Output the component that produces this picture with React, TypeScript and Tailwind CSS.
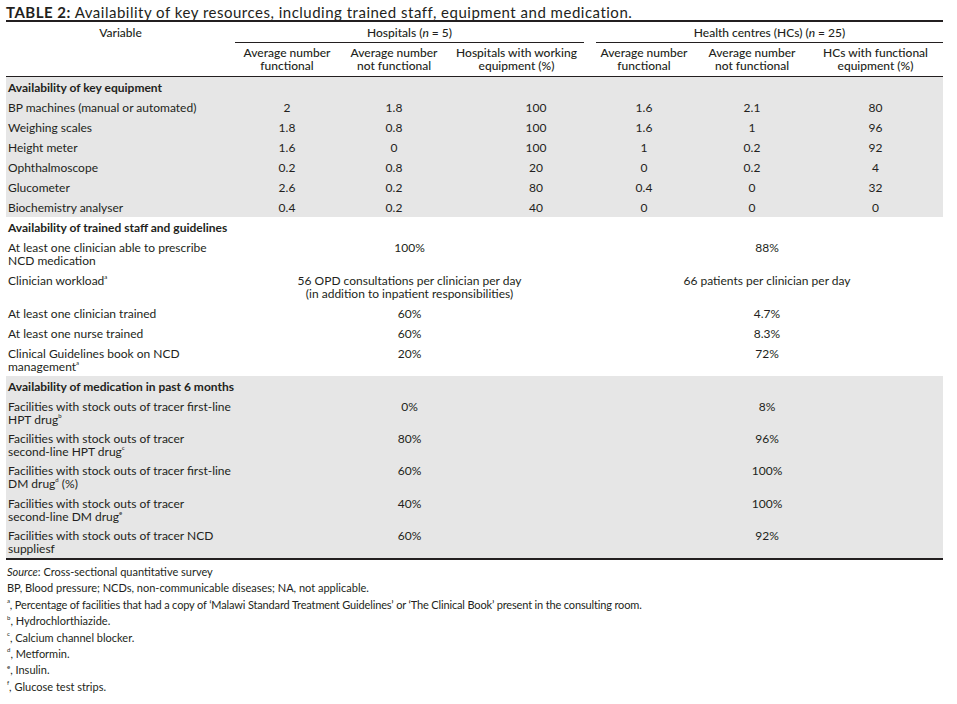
import { Fragment, ReactNode } from "react"

const FONT = "font-['Lato','Liberation_Sans',sans-serif]"

type EquipRow = { label: string; values: string[] }

const equipment: EquipRow[] = [
  { label: "BP machines (manual or automated)", values: ["2", "1.8", "100", "1.6", "2.1", "80"] },
  { label: "Weighing scales", values: ["1.8", "0.8", "100", "1.6", "1", "96"] },
  { label: "Height meter", values: ["1.6", "0", "100", "1", "0.2", "92"] },
  { label: "Ophthalmoscope", values: ["0.2", "0.8", "20", "0", "0.2", "4"] },
  { label: "Glucometer", values: ["2.6", "0.2", "80", "0.4", "0", "32"] },
  { label: "Biochemistry analyser", values: ["0.4", "0.2", "40", "0", "0", "0"] },
]

type MergedRow = { label: ReactNode; hospital: ReactNode; hc: ReactNode }

const Sup = ({ children }: { children: ReactNode }) => (
  <sup className="relative -top-[1px] align-super text-[6px] leading-none">{children}</sup>
)

const staff: MergedRow[] = [
  {
    label: (
      <>
        At least one clinician able to prescribe
        <br />
        NCD medication
      </>
    ),
    hospital: "100%",
    hc: "88%",
  },
  {
    label: (
      <>
        Clinician workload<Sup>a</Sup>
      </>
    ),
    hospital: (
      <>
        56 OPD consultations per clinician per day
        <br />
        (in addition to inpatient responsibilities)
      </>
    ),
    hc: "66 patients per clinician per day",
  },
  { label: "At least one clinician trained", hospital: "60%", hc: "4.7%" },
  { label: "At least one nurse trained", hospital: "60%", hc: "8.3%" },
  {
    label: (
      <>
        Clinical Guidelines book on NCD
        <br />
        management<Sup>a</Sup>
      </>
    ),
    hospital: "20%",
    hc: "72%",
  },
]

const medication: MergedRow[] = [
  {
    label: (
      <>
        Facilities with stock outs of tracer first-line
        <br />
        HPT drug<Sup>b</Sup>
      </>
    ),
    hospital: "0%",
    hc: "8%",
  },
  {
    label: (
      <>
        Facilities with stock outs of tracer
        <br />
        second-line HPT drug<Sup>c</Sup>
      </>
    ),
    hospital: "80%",
    hc: "96%",
  },
  {
    label: (
      <>
        Facilities with stock outs of tracer first-line
        <br />
        DM drug<Sup>d</Sup> (%)
      </>
    ),
    hospital: "60%",
    hc: "100%",
  },
  {
    label: (
      <>
        Facilities with stock outs of tracer
        <br />
        second-line DM drug<Sup>e</Sup>
      </>
    ),
    hospital: "40%",
    hc: "100%",
  },
  {
    label: (
      <>
        Facilities with stock outs of tracer NCD
        <br />
        suppliesf
      </>
    ),
    hospital: "60%",
    hc: "92%",
  },
]

const cell = "px-[2px] py-[3.5px] align-top leading-[13px]"
const tight = "px-[2px] pt-[3.5px] pb-[2.9px] align-top leading-[13px]"
const head = "px-[2px] align-top leading-[13px] text-center font-medium"

const SectionHeader = ({ title }: { title: string }) => (
  <tr>
    <td colSpan={8} className={`${cell} whitespace-nowrap font-bold`}>
      {title}
    </td>
  </tr>
)

const MergedRows = ({ rows, pad }: { rows: MergedRow[]; pad: string }) => (
  <Fragment>
    {rows.map((row, i) => (
      <tr key={i}>
        <td className={`${pad} whitespace-nowrap`}>{row.label}</td>
        <td colSpan={3} className={`${pad} text-center`}>
          {row.hospital}
        </td>
        <td />
        <td colSpan={3} className={`${pad} pr-[7px] text-center`}>
          {row.hc}
        </td>
      </tr>
    ))}
  </Fragment>
)

export default function App() {
  return (
    <div className={`${FONT} min-h-[704px] w-[957px] bg-white px-[6px] pt-[4px] text-[12px] text-[#231f20]`}>
      <p className="whitespace-nowrap text-[15px] leading-[16px] tracking-[0.5px]">
        <span className="font-bold">TABLE 2:</span> Availability of key resources, including trained staff,
        equipment and medication.
      </p>

      <table className="w-[937px] table-fixed">
        <colgroup>
          <col className="w-[229px]" />
          <col className="w-[104px]" />
          <col className="w-[110px]" />
          <col className="w-[135px]" />
          <col className="w-[12px]" />
          <col className="w-[96px]" />
          <col className="w-[120px]" />
          <col className="w-[131px]" />
        </colgroup>
        <thead>
          <tr className="border-t-2 border-[#231f20]">
            <th rowSpan={2} className={`${head} border-b border-[#231f20] pt-[4px]`}>
              Variable
            </th>
            <th colSpan={3} className={`${head} border-b border-[#231f20] pt-[4px] pb-[3px]`}>
              Hospitals (<i>n</i> = 5)
            </th>
            <th />
            <th colSpan={3} className={`${head} border-b border-[#231f20] pt-[4px] pb-[3px]`}>
              Health centres (HCs) (<i>n</i> = 25)
            </th>
          </tr>
          <tr className="border-b border-[#231f20]">
            <th className={`${head} pt-[3px] pb-[4px]`}>
              Average number
              <br />
              functional
            </th>
            <th className={`${head} pt-[3px] pb-[4px]`}>
              Average number
              <br />
              not functional
            </th>
            <th className={`${head} pt-[3px] pb-[4px]`}>
              Hospitals with working
              <br />
              equipment (%)
            </th>
            <th />
            <th className={`${head} pt-[3px] pb-[4px]`}>
              Average number
              <br />
              functional
            </th>
            <th className={`${head} pt-[3px] pb-[4px]`}>
              Average number
              <br />
              not functional
            </th>
            <th className={`${head} pt-[3px] pb-[4px] pr-[6px]`}>
              HCs with functional
              <br />
              equipment (%)
            </th>
          </tr>
        </thead>

        <tbody className="bg-[#e6e6e6]">
          <SectionHeader title="Availability of key equipment" />
          {equipment.map((row) => (
            <tr key={row.label}>
              <td className={`${cell} whitespace-nowrap`}>{row.label}</td>
              <td className={`${cell} text-center`}>{row.values[0]}</td>
              <td className={`${cell} text-center`}>{row.values[1]}</td>
              <td className={`${cell} pl-[41px] text-center`}>{row.values[2]}</td>
              <td />
              <td className={`${cell} text-center`}>{row.values[3]}</td>
              <td className={`${cell} text-center`}>{row.values[4]}</td>
              <td className={`${cell} pr-[6px] text-center`}>{row.values[5]}</td>
            </tr>
          ))}
        </tbody>

        <tbody>
          <SectionHeader title="Availability of trained staff and guidelines" />
          <MergedRows rows={staff} pad={cell} />
        </tbody>

        <tbody className="border-b-2 border-[#231f20] bg-[#e6e6e6]">
          <SectionHeader title="Availability of medication in past 6 months" />
          <MergedRows rows={medication} pad={tight} />
        </tbody>
      </table>

      <div className="px-[1px] pt-[4px] text-[11px] leading-[16.4px]">
        <p>
          <i>Source</i>: Cross-sectional quantitative survey
        </p>
        <p>BP, Blood pressure; NCDs, non-communicable diseases; NA, not applicable.</p>
        <p className="tracking-[-0.15px]">
          <Sup>a</Sup>, Percentage of facilities that had a copy of ‘Malawi Standard Treatment Guidelines’ or ‘The
          Clinical Book’ present in the consulting room.
        </p>
        <p>
          <Sup>b</Sup>, Hydrochlorthiazide.
        </p>
        <p>
          <Sup>c</Sup>, Calcium channel blocker.
        </p>
        <p>
          <Sup>d</Sup>, Metformin.
        </p>
        <p>
          <Sup>e</Sup>, Insulin.
        </p>
        <p>
          <Sup>f</Sup>, Glucose test strips.
        </p>
      </div>
    </div>
  )
}
